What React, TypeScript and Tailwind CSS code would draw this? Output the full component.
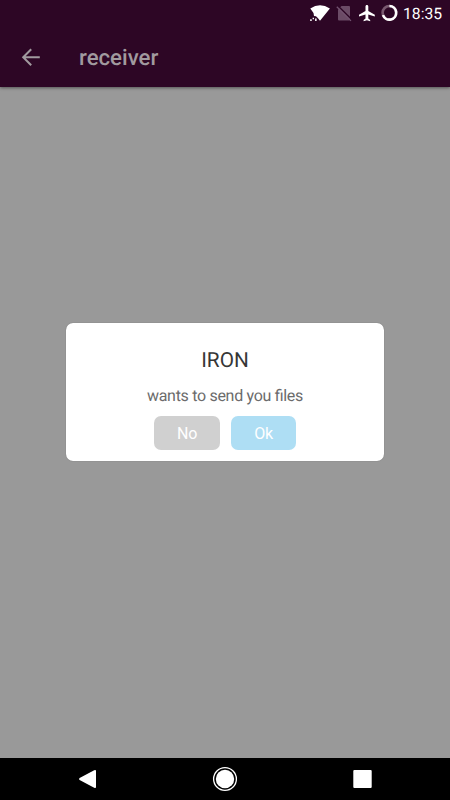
function StatusBar() {
  return (
    <div className="flex h-7 w-full shrink-0 justify-end text-white">
      <svg width="100" height="28" viewBox="0 0 100 28" aria-hidden="true">
        <path d="M10.3 8.6 Q20 1.8 29.9 8.6 L20 20.8 18 18.3 16 16.3 14 16.1 13.5 13Z" fill="white" />
        <path d="M10.2 19.3h1.5v1.6h-1.5zM12.6 17.8h1.4v1.4h-1.4zM15.1 18.6h1.5v2.3h-1.5z" fill="white" />
        <path d="M38 9.5 41.5 6H49Q50 6 50 7V19.5Q50 20.5 49 20.5H39Q38 20.5 38 19.5Z" fill="#6b4b66" />
        <path d="M38 6 52 19.8" stroke="#2d0625" strokeWidth="1.6" />
        <path d="M36.8 6.8 51 20.9" stroke="#735370" strokeWidth="1.3" />
        <path d="M66.9 4.9c-.9 0-1.4.7-1.4 1.6v4.4L59 14.8v1.8l6.5-2v4l-1.9 1.4v1.2l3.3-.9 3.3.9V20l-1.9-1.4v-4l6.5 2v-1.8l-6.5-3.9V6.5c0-.9-.5-1.6-1.4-1.6Z" fill="white" />
        <circle cx="89.4" cy="12.8" r="6.8" fill="none" stroke="#79586f" strokeWidth="2.6" />
        <path d="M89.4 6a6.8 6.8 0 1 1-6.4 9.1" fill="none" stroke="white" strokeWidth="2.6" />
      </svg>
      <span className="ml-[3px] mr-[8px] w-[39px] whitespace-nowrap text-[15.7px] leading-[28px]">18:35</span>
    </div>
  );
}

function Header() {
  return (
    <header className="z-10 flex h-[87px] shrink-0 flex-col bg-[#2d0625] shadow-[0_1px_3px_rgba(0,0,0,0.45)]">
      <StatusBar />
      <div className="flex h-[59px] items-center pl-[21px]">
        <svg width="20" height="20" viewBox="0 0 20 20" fill="none" stroke="#a19a9f" strokeWidth="2" aria-label="Back">
          <path d="M18.8 9.3H2.5M10.2 1.3l-8 8 8 8" />
        </svg>
        <h1 className="ml-[38px] pt-px text-[22.2px] font-medium leading-[28px] text-[#a19a9f]">receiver</h1>
      </div>
    </header>
  );
}

function Dialog() {
  return (
    <section className="mt-[236px] ml-[66px] flex h-[138px] w-[318px] flex-col items-center rounded-[7px] bg-white pt-[23px] shadow-[0_0_1px_rgba(0,0,0,0.4)]">
      <h2 className="text-[20.8px] leading-[30px] text-[#363636]">IRON</h2>
      <p className="mt-[9px] text-[16px] leading-[22px] tracking-[-0.3px] text-[#6b6b6b] [font-feature-settings:'liga'_1]">wants to send you files</p>
      <div className="mt-[9px] flex gap-[11px] text-[16px] leading-[36px] tracking-[-0.2px] text-white">
        <button className="h-[34px] w-[66px] rounded-[7px] bg-[#d0d0d0]">No</button>
        <button className="h-[34px] w-[65px] rounded-[7px] bg-[#aedef4]">Ok</button>
      </div>
    </section>
  );
}

function NavigationBar() {
  return (
    <nav className="h-[42px] shrink-0 bg-black">
      <svg width="450" height="42" viewBox="0 0 450 42" fill="white" aria-hidden="true">
        <path d="M79.6 20.1 94.2 12.2Q96 11.4 96 13.1V29Q96 30.7 94.2 29.8L79.6 21.9Q78.4 21 79.6 20.1Z" />
        <circle cx="225" cy="21" r="9.2" />
        <circle cx="225" cy="21" r="11.4" fill="none" stroke="white" strokeWidth="1.3" />
        <rect x="353.3" y="12" width="18.4" height="18" rx="1" />
      </svg>
    </nav>
  );
}

export default function App() {
  return (
    <div className="flex h-[800px] w-[450px] flex-col overflow-hidden bg-[#999999] font-['Roboto',sans-serif] [text-rendering:geometricPrecision]">
      <Header />
      <main className="min-h-0 flex-1">
        <div className="flow-root">
          <Dialog />
        </div>
      </main>
      <NavigationBar />
    </div>
  );
}
